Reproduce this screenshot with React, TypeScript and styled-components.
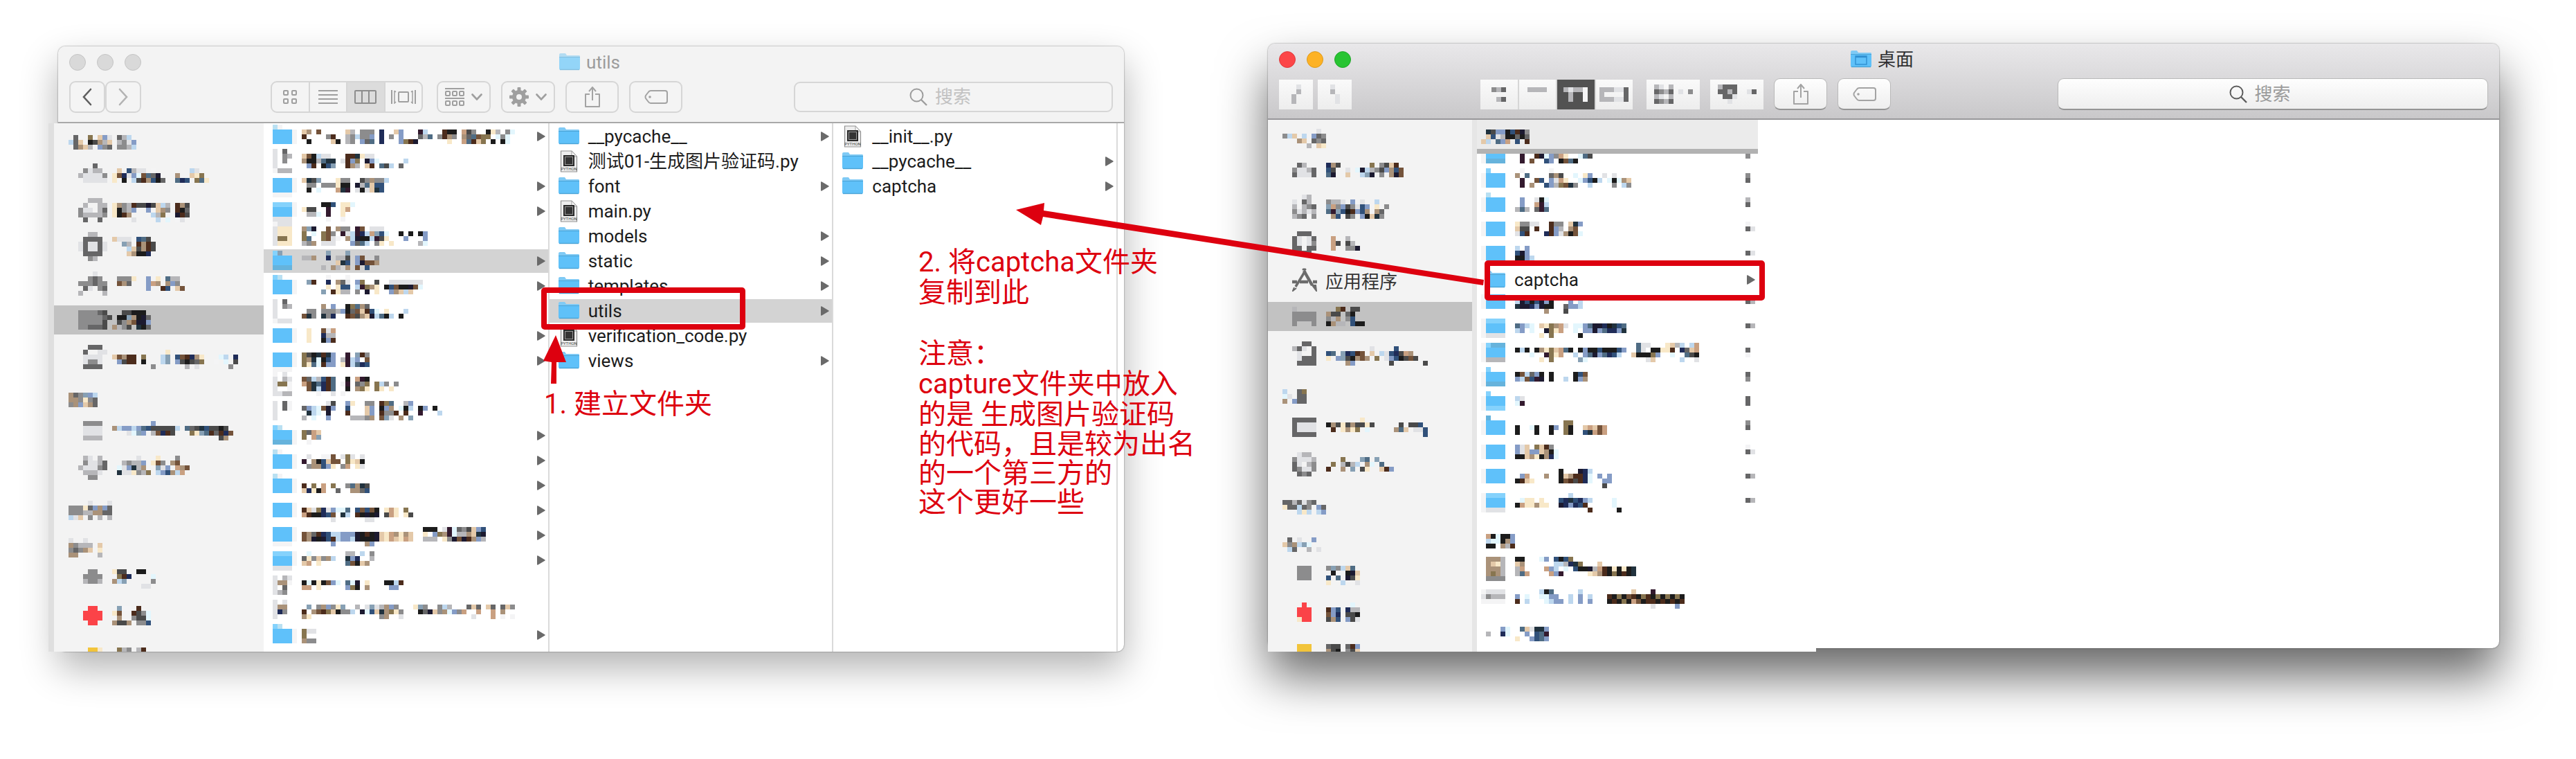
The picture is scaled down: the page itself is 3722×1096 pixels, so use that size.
import React from "react";
import styled, { createGlobalStyle, css } from "styled-components";

const GlobalStyle = createGlobalStyle`
  * { box-sizing: border-box; }
  body {
    margin: 0;
    background: #fff;
    font-family: Roboto, "Noto Sans CJK SC", sans-serif;
    font-size: 26px;
    color: #1c1c1c;
  }
  button, input { font: inherit; color: inherit; }
`;

/* ---------- pixelated content ---------- */

const CELL = 7;
const LATTICE_TOP = 187;

const palette: Record<string, string> = {
  K: "#1c1c1c", d: "#4a4a4a", e: "#666667", g: "#8c8c8d", l: "#b6b6b9", w: "#e1e2e5", v: "#f4f4f5",
  B: "#1c1a30", N: "#1f2c58", n: "#31517a", t: "#4f6c84", b: "#859cc6", x: "#87a0b4", c: "#bdd7ee", i: "#e3f6fd",
  R: "#4c2c1c", r: "#74533a", o: "#877550", T: "#aa9279", s: "#c9a081", p: "#e4c9a9", y: "#f8e8c8",
  P: "#331a2e", m: "#21323e",
  F: "#5fc1fa", f: "#85d2fc", h: "#b9e0f2", q: "#66b3dc",
  E: "#fb4348", Y: "#f2c43a",
};

const MosaicSvg = styled.svg`
  display: block;
  flex: none;
  overflow: visible;
  shape-rendering: crispEdges;
`;

function Mosaic({ lines, shift = 0, rows }: { lines: string[]; shift?: number; rows?: number }) {
  const cols = Math.max(...lines.map((l) => l.length), 1);
  const cells: React.ReactNode[] = [];
  lines.forEach((line, j) => {
    let c = 0;
    while (c < line.length) {
      const ch = line[c];
      let end = c + 1;
      while (end < line.length && line[end] === ch) end++;
      if (palette[ch]) {
        cells.push(
          <rect key={j + "-" + c} x={c * CELL} y={shift + j * CELL} width={(end - c) * CELL} height={CELL} fill={palette[ch]} />
        );
      }
      c = end;
    }
  });
  return (
    <MosaicSvg width={cols * CELL} height={rows ?? lines.length * CELL} aria-hidden="true">
      {cells}
    </MosaicSvg>
  );
}

/* All file rows share one vertical lattice, so each row starts at its own phase. */
function latticeShift(rowTop: number) {
  const dy = (((LATTICE_TOP - rowTop) % CELL) + CELL) % CELL || CELL;
  return dy - CELL;
}

/* ---------- icons ---------- */

const FolderIcon = ({ pale = false, desktop = false }: { pale?: boolean; desktop?: boolean }) => {
  const back = pale ? "#b3dcf2" : "#7fcaf5";
  const front = pale ? "#93d5f8" : "#5fc1f9";
  const edge = pale ? "#83bfdf" : "#4aa3d6";
  return (
    <svg width="30" height="26" viewBox="0 0 30 26" aria-hidden="true">
      <path d="M0 2 Q0 0 2 0 H9 L11 3 H29 Q30 3 30 5 V8 H0 Z" fill={back} />
      <path d="M0 5 H30 V22 Q30 24 28 24 H2 Q0 24 0 22 Z" fill={front} />
      <path d="M0 5.5 H30" stroke={edge} strokeWidth="1" />
      <path d="M1 23.5 H29" stroke={edge} strokeWidth="1.4" />
      {desktop && (
        <>
          <rect x="7" y="8" width="16" height="12" fill="none" stroke="#2f8fd0" strokeWidth="1.4" />
          <path d="M7 9 H23" stroke="#2f8fd0" strokeWidth="2.4" />
        </>
      )}
    </svg>
  );
};

const PythonIcon = () => (
  <svg width="30" height="32" viewBox="0 0 30 32" aria-hidden="true">
    <path d="M3.5 1 H19 L26.500 9 V31 H3.500 Z" fill="#eeeeee" stroke="#8f8f8f" strokeWidth="1.200" />
    <path d="M19 1 V9 H26.500 Z" fill="#fafafa" stroke="#a0a0a0" />
    <rect x="7" y="7" width="16" height="16" fill="#2a2a2a" />
    <rect x="9.500" y="9.500" width="11" height="11" fill="#333" stroke="#999" />
    <text x="15" y="29" textAnchor="middle" fontSize="6" fill="#444" fontFamily="Roboto, sans-serif">PYTHON</text>
  </svg>
);

const Triangle = () => (
  <svg width="12" height="14" viewBox="0 0 12 14" aria-hidden="true">
    <path d="M0 1 Q0 0 1.500 0.500 L11.500 6.500 Q12 7 11.500 7.500 L1.500 13.500 Q0 14 0 13 Z" fill="#6a6a6a" />
  </svg>
);

const AppsIcon = () => (
  <svg width="36" height="34" viewBox="0 0 36 34" fill="none" stroke="#6b6b6b" aria-hidden="true">
    <path d="M16 2 L19 2" strokeWidth="3" strokeLinecap="round" />
    <path d="M17 4 L29 25" strokeWidth="4.500" />
    <path d="M29 25 L35 33 L34 25 Z" fill="#6b6b6b" strokeWidth="2" />
    <path d="M19 4 L5 27" strokeWidth="3.500" />
    <path d="M3 28 L1 33 L6 29" strokeWidth="2" />
    <path d="M0 20 H7 M11 20 H23 M30 20 H36" strokeWidth="4.500" />
  </svg>
);

const ChevronIcon = ({ dir, color }: { dir: "left" | "right"; color: string }) => (
  <svg width="14" height="26" viewBox="0 0 14 26" fill="none" stroke={color} strokeWidth="2.600" strokeLinecap="round" aria-hidden="true">
    <path d={dir === "left" ? "M12 2 L2 13 L12 24" : "M2 2 L12 13 L2 24"} />
  </svg>
);

const DownIcon = () => (
  <svg width="16" height="10" viewBox="0 0 16 10" fill="none" stroke="#9f9f9f" strokeWidth="2.600" strokeLinecap="round" aria-hidden="true">
    <path d="M1.500 1.500 L8 8.500 L14.500 1.500" />
  </svg>
);

const GridIcon = () => (
  <svg width="22" height="22" viewBox="0 0 22 22" fill="none" stroke="#9f9f9f" strokeWidth="2" aria-hidden="true">
    <rect x="2" y="2" width="6" height="6" rx="1" /><rect x="14" y="2" width="6" height="6" rx="1" />
    <rect x="2" y="14" width="6" height="6" rx="1" /><rect x="14" y="14" width="6" height="6" rx="1" />
  </svg>
);

const LinesIcon = () => (
  <svg width="28" height="20" viewBox="0 0 28 20" stroke="#9f9f9f" strokeWidth="2" aria-hidden="true">
    <path d="M0 1 H28 M0 7 H28 M0 13 H28 M0 19 H28" />
  </svg>
);

const ColumnsIcon = () => (
  <svg width="32" height="20" viewBox="0 0 32 20" fill="none" stroke="#8d8d8d" strokeWidth="2" aria-hidden="true">
    <rect x="1" y="1" width="30" height="18" rx="1" />
    <path d="M11 1 V19 M21 1 V19" />
  </svg>
);

const FlowIcon = () => (
  <svg width="36" height="20" viewBox="0 0 36 20" fill="none" stroke="#9f9f9f" strokeWidth="2" aria-hidden="true">
    <path d="M1 0 V20 M35 0 V20" />
    <path d="M5 1 V19 L7 17 M5 1 L7 3 M31 1 V19 L29 17 M31 1 L29 3" strokeWidth="1.500" />
    <rect x="11" y="3" width="14" height="14" rx="1" />
  </svg>
);

const ArrangeIcon = () => (
  <svg width="28" height="26" viewBox="0 0 28 26" fill="none" stroke="#9f9f9f" strokeWidth="2" aria-hidden="true">
    <path d="M0 1 H28 M0 15 H28" />
    {[1, 11, 21].map((x) => (
      <g key={x}>
        <rect x={x} y="5" width="6" height="6" rx="1" />
        <rect x={x} y="19" width="6" height="6" rx="1" />
      </g>
    ))}
  </svg>
);

const GearIcon = () => (
  <svg width="28" height="28" viewBox="-14 -14 28 28" aria-hidden="true">
    {[0, 45, 90, 135].map((a) => (
      <rect key={a} x="-2.500" y="-14" width="5" height="28" rx="1" fill="#9f9f9f" transform={"rotate(" + a + ")"} />
    ))}
    <circle r="7" fill="none" stroke="#9f9f9f" strokeWidth="6" />
    <circle r="4" fill="#f3f3f3" />
  </svg>
);

const ShareIcon = () => (
  <svg width="22" height="30" viewBox="0 0 22 30" fill="none" stroke="#a3a3a3" strokeWidth="2" aria-hidden="true">
    <path d="M7 11 H1 V29 H21 V11 H15" strokeLinejoin="round" />
    <path d="M11 20 V2 M6 7 L11 1 L16 7" />
  </svg>
);

const TagIcon = () => (
  <svg width="34" height="20" viewBox="0 0 34 20" fill="none" stroke="#a3a3a3" strokeWidth="2" aria-hidden="true">
    <path d="M9 1 H30 Q33 1 33 4 V16 Q33 19 30 19 H9 Q7 19 5 16 L2 12 Q1 10 2 8 L5 4 Q7 1 9 1 Z" />
    <circle cx="8" cy="10" r="1.800" fill="#a3a3a3" stroke="none" />
  </svg>
);

const SearchIcon = ({ color }: { color: string }) => (
  <svg width="26" height="26" viewBox="0 0 26 26" fill="none" stroke={color} strokeWidth="2" aria-hidden="true">
    <circle cx="10.500" cy="10.500" r="9" />
    <path d="M17 17 L25 25" strokeWidth="2.400" />
  </svg>
);

/* ---------- window chrome ---------- */

const Desktop = styled.main`
  position: relative;
  display: flex;
  align-items: flex-start;
  gap: 208px;
  padding: 63px 111px 155px 84px;
  min-width: 2600px;
  overflow: hidden;
`;

const Window = styled.section<{ $active?: boolean }>`
  flex: ${(p) => (p.$active ? 1779 : 1540)} 1 0;
  min-width: 0;
  margin-top: ${(p) => (p.$active ? 0 : 4)}px;
  border-radius: 10px;
  background: #fff;
  box-shadow: ${(p) =>
    p.$active
      ? "0 0 2px rgba(0,0,0,.55), 0 40px 70px rgba(0,0,0,.6)"
      : "0 0 2px rgba(0,0,0,.55), 0 24px 54px rgba(0,0,0,.3)"};
`;

const Chrome = styled.header<{ $active?: boolean }>`
  height: ${(p) => (p.$active ? 110 : 111)}px;
  padding-top: 6px;
  border-radius: 10px 10px 0 0;
  border-bottom: 2px solid ${(p) => (p.$active ? "#98979a" : "#a9a9a9")};
  background: ${(p) => (p.$active ? "linear-gradient(#e9e8ea, #c9c8ca)" : "#f3f3f3")};
`;

const TitleRow = styled.div`
  display: grid;
  grid-template-columns: 1fr auto 1fr;
  align-items: center;
  height: 34px;
  padding-right: 4px;
`;

const Lights = styled.div`
  display: flex;
  gap: 16px;
  padding-left: 16px;
`;

const Light = styled.button<{ $color: string; $edge: string }>`
  width: 24px;
  height: 24px;
  padding: 0;
  border: 1px solid ${(p) => p.$edge};
  border-radius: 50%;
  background: ${(p) => p.$color};
`;

const Title = styled.h1<{ $active?: boolean }>`
  display: flex;
  align-items: center;
  gap: 9px;
  margin: 0;
  font-size: 26px;
  line-height: 34px;
  font-weight: 400;
  color: ${(p) => (p.$active ? "#2f2f31" : "#9c9c9c")};
`;

const Toolbar = styled.div`
  display: flex;
  align-items: center;
  gap: 15px;
  height: 46px;
  margin-top: 10px;
  padding: 0 16px;
`;

const NavGroup = styled.div<{ $pixel?: boolean }>`
  display: flex;
  gap: ${(p) => (p.$pixel ? 7 : 0)}px;
  width: 276px;
`;

const plain = css`
  border: 2px solid #d6d6d6;
  border-radius: 9px;
  background: #f4f4f4;
`;
const raised = css`
  border: 1px solid #b9b9b9;
  border-bottom: 2px solid #949494;
  border-radius: 9px;
  background: linear-gradient(#fefefe, #eeeeee);
`;
const pixelated = css`
  height: 43px;
  border: 0;
  background: linear-gradient(#fafafa, #ededed);
`;

const ToolButton = styled.button<{ $w: number; $look: "plain" | "raised" | "pixel" }>`
  display: flex;
  flex: none;
  align-items: center;
  justify-content: center;
  gap: 10px;
  width: ${(p) => p.$w}px;
  height: 46px;
  padding: 0;
  ${(p) => (p.$look === "plain" ? plain : p.$look === "raised" ? raised : pixelated)}
`;

const Segments = styled.div<{ $pixel?: boolean }>`
  display: flex;
  flex: none;
  width: 220px;
  height: 46px;
  margin-right: 5px;
  overflow: hidden;
  ${(p) => (p.$pixel ? pixelated : plain)}
  ${(p) => p.$pixel && "overflow: visible;"}
`;

const Segment = styled.button<{ $on?: boolean; $pixel?: boolean }>`
  display: flex;
  flex: 1 1 0;
  align-items: center;
  justify-content: center;
  padding: 0;
  border: 0;
  background: ${(p) => (p.$on ? (p.$pixel ? "#525252" : "#dcdcdc") : "transparent")};
  ${(p) => !p.$pixel && "& + & { border-left: 2px solid #d6d6d6; }"}
`;

const SearchBox = styled.label<{ $active?: boolean }>`
  display: flex;
  flex: 0 1 ${(p) => (p.$active ? 622 : 461)}px;
  align-items: center;
  justify-content: center;
  gap: 11px;
  height: ${(p) => (p.$active ? 46 : 44)}px;
  margin-left: auto;
  padding-right: 34px;
  ${(p) => (p.$active ? raised : plain)}
`;

const SearchInput = styled.input<{ $active?: boolean }>`
  width: 56px;
  height: 36px;
  padding: 0;
  border: 0;
  outline: 0;
  background: transparent;
  font-size: 26px;
  &::placeholder { color: ${(p) => (p.$active ? "#9b9b9b" : "#c2c2c2")}; opacity: 1; }
`;

/* ---------- window body ---------- */

const Browser = styled.div`
  display: grid;
  grid-template-columns: 297px repeat(3, 1fr) 11px;
  height: 763px;
`;

const Sidebar = styled.nav<{ $bleed?: boolean }>`
  display: flex;
  flex-direction: column;
  gap: 12px;
  flex: none;
  padding-top: 9px;
  overflow: hidden;
  background: #f3f3f3;
  ${(p) =>
    p.$bleed
      ? "margin-left: -6px; box-shadow: -8px 0 0 #dfdfdf;"
      : "width: 302px; border-right: 7px solid #e6e6e6;"}
`;

const SideSection = styled.div`
  flex: none;
  min-height: 42px;
`;

const SideHeading = styled.div`
  display: flex;
  align-items: center;
  height: 36px;
  padding-left: 21px;
`;

const SideItem = styled.div<{ $on?: boolean }>`
  display: flex;
  align-items: center;
  height: 42px;
  margin: 6px 0 11px;
  padding-left: 21px;
  background: ${(p) => (p.$on ? "#c2c2c2" : "transparent")};
  & + & { margin-top: 11px; }
`;

const SideButton = styled.button`
  display: flex;
  align-items: center;
  gap: 12px;
  height: 42px;
  padding: 0 0 0 14px;
  border: 0;
  background: none;
  color: #333;
`;

const Column = styled.div<{ $first?: boolean }>`
  display: flex;
  flex-direction: column;
  gap: 2px;
  padding-top: 2px;
  min-width: 0;
  border-left: ${(p) => (p.$first ? 0 : 2)}px solid #dadada;
`;

const Row = styled.button<{ $on?: boolean; $pad?: number }>`
  display: flex;
  flex: none;
  align-items: center;
  gap: 13px;
  width: 100%;
  height: 34px;
  padding: 0 4px 0 ${(p) => p.$pad ?? 13}px;
  border: 0;
  background: ${(p) => (p.$on ? "#d3d3d3" : "transparent")};
  line-height: 34px;
  text-align: left;
  white-space: nowrap;
  & > :last-child:not(:first-child) { margin-left: auto; }
`;

const HiddenRow = styled.div<{ $on?: boolean; $pad?: number }>`
  display: flex;
  flex: none;
  align-items: flex-start;
  justify-content: space-between;
  height: 34px;
  padding: 0 4px 0 ${(p) => p.$pad ?? 13}px;
  background: ${(p) => (p.$on ? "#d3d3d3" : "transparent")};
`;

const ArrowSlot = styled.span`
  display: flex;
  align-items: center;
  height: 34px;
`;

const Name = styled.span`
  display: block;
`;

/* ---------- second window's body ---------- */

const DesktopBody = styled.div`
  height: 763px;
`;

const Pane = styled.div`
  display: flex;
  width: 792px;
  height: 768px;
  background: #fff;
`;

const PixelColumn = styled.div`
  width: 406px;
  overflow: hidden;
`;

const ColumnHeading = styled.div`
  height: 49px;
  padding: 14px 0 0 6px;
  border-bottom: 7px solid #b2b2b2;
  background: #ebebeb;
`;

const Scrolled = styled.div`
  display: flex;
  flex-direction: column;
  gap: 2px;
  overflow: hidden;
  & > :first-child { margin-top: -15px; }
`;

const Group = styled.div`
  padding: 26px 0 0 13px;
`;

const GroupRow = styled.div`
  padding: 12px 0 0 6px;
`;

/* ---------- annotations ---------- */

const Frame = styled.div<{ $x: number; $y: number; $w: number; $h: number }>`
  position: absolute;
  left: ${(p) => p.$x}px;
  top: ${(p) => p.$y}px;
  width: ${(p) => p.$w}px;
  height: ${(p) => p.$h}px;
  border: 8px solid #dd000f;
  border-radius: 5px;
`;

const Arrows = styled.svg`
  position: absolute;
  left: 0;
  top: 0;
  pointer-events: none;
`;

const Note = styled.div<{ $x: number; $y: number }>`
  position: absolute;
  left: ${(p) => p.$x}px;
  top: ${(p) => p.$y}px;
  color: #dd000f;
  font-size: 40px;
  white-space: nowrap;
`;

const Lines = styled.p<{ $lh: number }>`
  margin: 0;
  line-height: ${(p) => p.$lh}px;
  white-space: pre;
`;

/* ---------- data ---------- */

type Side = { heading: string[]; items: (string[] | "apps")[]; on?: number };

const leftSide: Side[] = [
  {
    heading: [".e..o.pbw.elc", "cep.KdTlp.lgwb", ".eTpl.bge.gglc"],
    on: 4,
    items: [
      [".....e", "...gwll...p.nlww.v.......cw", "..lwwwwg.yrNwbirteB...T..pyo", "...wwwww.y.K.cdRTnKe..tNn.oty"],
      ["....lll", "...l..ll.yTglRddBdpcl.RTd", "..gww.le.yKglb..b.pTg.RKe", "..gllllg.yKRT....clo..BRd", "...e..e......w....c.i.vw"],
      ["....ll", "...eeee..pwww.ntd", "..wewwew...xl.RTRd", "..wewwew....cpdTRd", "...eeee.....pTKKN", "....gl"],
      [".....w", "....geg...gggy..b.y.tll", "..gggegg..rTe...bsT.Tbg", "...ew.ge........b..Rn.pr", "..l....l"],
      ["..gggged...ddKKK", "..ggggged.KKxTKBe", "..gggggd..dgTrBBb", "..ggeeed.Tlgd.mKe"],
      ["....eee", "...e..ww............y", "...wwww..prTRR.o...cx.nrRNTy...ic.N", "...wggw...bdRR.K...cx.bdKdeo..v.i.d", "...eeee..........g......l.w......g"],
    ],
  },
  {
    heading: ["Tegxbc", "TTgyge", "gTbpTe"],
    items: [
      ["...gggg..........b", "...wwww..Tcbbcbtndddddc.tedmnddKd", "...wwww.....wixb.lrNRd...oyxtReRNr", "...llll........................dT"],
      ["...lw.l.......w...y...g", "...gwwle...lgllb.yrg.Tr", "..lwwwge..iwbmlT..xwb.sTr", "...lllw...mwwyglo.cbnTcs", "....gg"],
    ],
  },
  { heading: ["....w...w", "gggyebTbe", "gggllTTee", "cwp.g.l.l"], items: [] },
  {
    heading: ["w..w", "Tglll.p", "gegTp.y", "TT..v.l"],
    items: [
      ["....gg...ydd..KK", "...gggg...oRN....i", "...lggl..Tcx.....g", "...............ww"],
      ["....EE....xvv.R", "...EEEE..yr..Rdgi", "...EEEE...T..gddi", "....EE...TddT.ggn"],
      ["....YYy...olg.lR", "....YYY...dd..ddd"],
    ],
  },
];

const rightSide: Side[] = [
  {
    heading: [".......w", "gcp.c.beg", "...Tp.ege", ".....l.py"],
    on: 4,
    items: [
      ["...el....NTd......o.gdpR", "..gwwle..nd..w.iBclgdbTnr", "..ewwwe..tB..p..cxB.g.TBr"],
      ["....wl", "..w.el...gllw.b.w..c", "..l.lge..xsgbdgwnb.y.g", "..gwlwl..tPxnKRbnT.Te", "..lge.g...Tn.dg.bKpmg"],
      ["...eee", "..ew.we...s..l", "..ew.wg...sd.dl", "..ee.ee...s..ggB", "...eee"],
      "apps",
      ["..l........oR.dd", "..ggggg..Tdd.eK", "..ggggg..glT.gn", "..g...g..KTll.nKK"],
      ["....ee", "..lew.e...........w....n", "...w..e..nt.xNnRr.p.cwnNdsT", "...weee..y.bxdKTrT.o.wbnKdrd", "...eeee......Tb.......d......d"],
    ],
  },
  {
    heading: ["c..eo", "iw.ee", "T.bee"],
    items: [
      ["..eeeee.........y", "..ewwww..KTdydTddyd.....d.ddn", "..ewwww...R.yTyo.i.....Ttp.wwn", "..eeeee......................n"],
      ["...wll...............", "..gwwwl.....o...xt.x", "..ew.lg...o.ldlc.Ti.t", "..egwwg..R..T.x.dy..pRb", "...ege"],
    ],
  },
  { heading: ["eelewge", "yeeceg.be", "...cyc.cb"], items: [] },
  {
    heading: [".e.w..b", "pgTcxi", ".ce..l.w"],
    items: [
      ["...ggg...gxgcpt", "...ggg....K..KBp", "...ggg...n.t.Bdy", ".........y..c..w"],
      ["....E.........i", "...EEE...Rbn.Nll", "...EEE...rbN.ddK", "...yEE...dTn.bdw"],
      ["...YYY...edd.eRb", "...YYY...TdK.gdp"],
    ],
  },
];

type Hidden = { lines: string[]; open?: boolean; on?: boolean };

const dots = (n: number) => ".".repeat(n);

const projectRows: Hidden[] = [
  { open: true, lines: ["hv", "FFFFv.pT.r.....pl.ggg.N..pb...Pc...RKK.sdg..Kyl.gi", "FFFFv.R....gR..lgcggb.N.g.b...elt.gRTg.Tetroo.igi", "FFFFv..K....pK.lg.bet.N...boRB......y..stRpo.K.Ki"] },
  { lines: ["w.e", "w.gl..prKcww...RRmyww", "w.g...TKKltmm.wRbo.Bbi.....c", "w......bR.Knx..RTl.pR.tdc.e", "vlll"] },
  { open: true, lines: ["", "FFFFv.pmdx...ygg..dgTggc", "FFFFv..gg.gggyKK.Bltpnn", "FFFFv..K.i...smP.wKwpmn", "vvvv"] },
  { open: true, lines: ["", "ffffv.....KKn.yyi", "FFFFv.ydd..P..ys", "FFFFv..lli.P..y", "wwww.......v..v"] },
  { lines: ["vwww", "wyyy..TxB..r.Tgg.Pr.www", "wyyy..o.i.org.PwcPNcsxni..K.K.Kb", "wooy..ot..orwv.TcBKKcPdy...b...b", "wyyy..lgT.www...betc.gy.y.....li"] },
  { open: true, on: true, lines: ["", "fx.........x...x", "FFFF..llT..N.lld.br..g", "FFFF.........pmn.bBrrT", "qqqq......l.Tl.T.r.n"] },
  { open: true, lines: ["", "fh.........v...v", "FFFFv..xR..N.Tew.bo..d..wwwwwww", "FFFFv......y.ynn.cPoTy.KnrKKBri", "FFFFv.....x.Ryll.g.B.y..bTpcp"] },
  { lines: ["w.e", "w.gl......T.b..KotTe", "w......gg.ggglbKerpRni.y...c", "w.....rmg.mgN..RrdTpBctKc.K", "vwww"] },
  { open: true, lines: ["", "FFFFv..y..rws", "FFFFv..y..Nll", "FFFFv..y..KbR"] },
  { open: true, lines: ["", "FFFFv.odKmRmb..P.xRg", "FFFFv.oTmiKnb.lPcb.r", "FFFFv.oytiRbb.yPctNn", "vvvv"] },
  { lines: ["v.w", "w.lw..reclnRt..K.sPK", "woov..srmtNRt.vP.ego.ocg.g", "w..v...rmcNRt..K.Toy.oy.y", "wwll.....v..w.v"] },
  { lines: ["", "w.ev.......wd..by..gg.Rot..lb", "w.ev..ebcirBb..n...pb.KbT.iKc.Kb.K", "w......mci.B...R...pb.RggR.R..P...c", "w.....l.i..b....lllgT.rxw.T.x"] },
  { open: true, lines: ["", "fh", "FFFFv.oesp", "FFFFv.o.sx", "qqqqv..v"] },
  { open: true, lines: ["", "hv", "FFFFv..w..vvr.wow.w", "FFFFv.P.TKnprr.oypK", "FFFFv..gTTnby.gs.yw"] },
  { open: true, lines: ["hv", "FFFFv.", "FFFFv.R.o.s.o..gtTmd", "FFFFv.pNyKs..e..TTen"] },
  { open: true, lines: ["", "FFFFv.", "FFFFv.RpwoNwbiit.nrnrK.ysy.o", "FFFFv.sRKKNnr.mc.RKBKB.dsy.yd", "............w......ww"] },
  { open: true, lines: ["", "FFFFv." + dots(25) + "KKK.wPiegdpbn", "FFFFv.rTeRNnccbbbBKRKBpysTyTp..y.boTPillTpmB", "FFFFv.rTBKBnRcbbcBKKKBpyspysp..lll.ygBrBRTbl", "vvvv........b......Tb"] },
  { open: true, lines: ["", "ffffv..i.......ll.c.g", "FFFFv.eygpgTc..mbN..l", "FFFFv.ps.y.....trKpT", "wwww"] },
  { lines: ["", "w.lw", "wTTv..KiKyKrbi.tiB.y...KKcR", "w.e...ss.y.....boK.T....bb", "wlg"] },
  { lines: ["", "w.w", "wTT....x.gTbgyx..l.wxwlTbg...yxg..gcl...epe.pe.epg", "wNg...R.TrRopKggc.BinpmToyg...KeBpgTibgs..s..s.T", "w.....Ty..............gT..w..............w...s.v.v"] },
  { open: true, lines: ["", "fh", "FFFFv.oww", "FFFFv.o", "FFFFv.Tgg"] },
];

const projectFiles = [
  { name: "__pycache__", folder: true },
  { name: "测试01-生成图片验证码.py" },
  { name: "font", folder: true },
  { name: "main.py" },
  { name: "models", folder: true },
  { name: "static", folder: true },
  { name: "templates", folder: true },
  { name: "utils", folder: true, on: true },
  { name: "verification_code.py" },
  { name: "views", folder: true },
];

const utilsFiles = [
  { name: "__init__.py" },
  { name: "__pycache__", folder: true },
  { name: "captcha", folder: true },
];

const desktopRows: ({ lines: string[]; arrow: string[] } | null)[] = [
  { lines: ["", "", "", "vFFFF...P..RBibgsy..itd", "vqqqq...P.r..nb.KrtK"], arrow: ["", "", "", "g"] },
  { lines: [".f......v.....v", "vFFFF..T.t....eTd..i.yb..w.w", "vFFFF...P..rn.bwsy..ibnKc.iKiTp", "vFFFF...P.T..nblormg..c....g.cg"], arrow: ["", "g", "e"] },
  { lines: [".h", "vFFFF...b..wKi", "vFFFF...b..sPc", "vFFFF..ltl.ePt"], arrow: ["", "l", "e"] },
  { lines: ["", "vFFFF..yggww..Rgg.pmb", "vFFFF..pdd.R..Rbl.Tr", "vFFFF..wnR...NRbwTKri"], arrow: ["", "v", "ew"] },
  { lines: ["", "vFFFF..c.b", "vFFFF..nBb", "vFFFF..KKbc"], arrow: ["", "", "ew"] },
  null,
  { lines: ["", "vFFFF", "vFFFF..cBnKnBbK...b.c", "vFFFF..mBBNbBKK..ebbc", ".............T...d"], arrow: ["", "", "el"] },
  { lines: ["", "vffff", "vFFFF..tbci.pyoTsw.iibtBBNKmnt", "vFFFF..cb.i..Boys..i.bbBbtNNbm", "vwwww.......y.o.....K"], arrow: ["", "", "el"] },
  { lines: ["vfqqq.." + dots(25) + "tww...yplc.cs", "vFFFF..KcK.KTyopstK.KbKKnKKKnb..tw.KKyyR.Neps", "vFFFF.....i..Poys..c.btBbtNnc..pKKKob..i..tdK", "vllll.......y.o.....xi............wp.....c..w"], arrow: ["", "e", "v"] },
  { lines: [".f", "vFFFF..KrcebK.K....Knr", "vFFFF..bcrnPB.K..c.KbT", "vqqqq"], arrow: ["", "e", "g"] },
  { lines: [".f", "vFFFF..cw", "vFFFF..iP", "vffff"], arrow: ["", "e", "e"] },
  { lines: [".q", "vFFFF............oo", "vFFFF..K..iK..Kb.oK..psprs", "vFFFF..K...K..K..oK..nmsrs"], arrow: ["", "g", "e"] },
  { lines: ["", "vFFFF..bwp.opRg", "vFFFF..bwpbbpTKi", "vFFFF..KKpTyKTNi"], arrow: ["", "v", "ew"] },
  { lines: ["", "vFFFF...........K...BNc", "vFFFF...bs...T..KpTRRNi.b.b", "vFFFF..KRpy.....KrRdRNi..bb", dots(25) + "d"], arrow: ["", "", "el"] },
  { lines: ["", "vffff.............c", "vFFFF...iyy.y...nNmnNbc....i", "vFFFF..KsyyTyy..BNbNnR.....i", "vwwww.................R.....K"], arrow: ["", "", "el"] },
];

/* ---------- parts ---------- */

function SidebarList({ sections, bleed }: { sections: Side[]; bleed?: boolean }) {
  return (
    <Sidebar $bleed={bleed}>
      {sections.map((s, n) => (
        <SideSection key={n}>
          <SideHeading><Mosaic lines={s.heading} /></SideHeading>
          {s.items.map((it, k) => (
            <SideItem key={k} $on={s.on === k}>
              {it === "apps" ? (
                <SideButton type="button"><AppsIcon /><Name>应用程序</Name></SideButton>
              ) : (
                <Mosaic lines={it} />
              )}
            </SideItem>
          ))}
        </SideSection>
      ))}
    </Sidebar>
  );
}

function FileRow({ name, folder, on, pad }: { name: string; folder?: boolean; on?: boolean; pad?: number }) {
  return (
    <Row type="button" $on={on} $pad={pad}>
      {folder ? <FolderIcon /> : <PythonIcon />}
      <Name>{name}</Name>
      {folder ? <Triangle /> : <span />}
    </Row>
  );
}

function Search({ id, active }: { id: string; active?: boolean }) {
  return (
    <SearchBox htmlFor={id} $active={active}>
      <SearchIcon color={active ? "#5c5c5c" : "#9c9c9c"} />
      <SearchInput id={id} type="text" placeholder="搜索" $active={active} />
    </SearchBox>
  );
}

const idle = { c: "#d9d9d9", e: "#c4c4c4" };

function UtilsWindow() {
  return (
    <Window>
      <Chrome>
        <TitleRow>
          <Lights>
            {["关闭", "最小化", "缩放"].map((l) => (
              <Light key={l} type="button" aria-label={l} $color={idle.c} $edge={idle.e} />
            ))}
          </Lights>
          <Title><FolderIcon pale />utils</Title>
          <span />
        </TitleRow>
        <Toolbar>
          <NavGroup>
            <ToolButton type="button" aria-label="后退" $w={52} $look="plain"><ChevronIcon dir="left" color="#5e5e5e" /></ToolButton>
            <ToolButton type="button" aria-label="前进" $w={52} $look="plain"><ChevronIcon dir="right" color="#b3b3b3" /></ToolButton>
          </NavGroup>
          <Segments>
            <Segment type="button" aria-label="图标"><GridIcon /></Segment>
            <Segment type="button" aria-label="列表"><LinesIcon /></Segment>
            <Segment type="button" aria-label="分栏" $on><ColumnsIcon /></Segment>
            <Segment type="button" aria-label="画廊"><FlowIcon /></Segment>
          </Segments>
          <ToolButton type="button" aria-label="排列" $w={78} $look="plain"><ArrangeIcon /><DownIcon /></ToolButton>
          <ToolButton type="button" aria-label="操作" $w={78} $look="plain"><GearIcon /><DownIcon /></ToolButton>
          <ToolButton type="button" aria-label="共享" $w={77} $look="plain"><ShareIcon /></ToolButton>
          <ToolButton type="button" aria-label="标签" $w={77} $look="plain"><TagIcon /></ToolButton>
          <Search id="search-utils" />
        </Toolbar>
      </Chrome>
      <Browser>
        <SidebarList sections={leftSide} bleed />
        <Column $first>
          {projectRows.map((r, k) => (
            <HiddenRow key={k} $on={r.on}>
              <Mosaic lines={r.lines} shift={latticeShift(180 + 36 * k)} rows={34} />
              <ArrowSlot>{r.open && <Triangle />}</ArrowSlot>
            </HiddenRow>
          ))}
        </Column>
        <Column>{projectFiles.map((f) => <FileRow key={f.name} {...f} />)}</Column>
        <Column>{utilsFiles.map((f) => <FileRow key={f.name} {...f} />)}</Column>
        <Column />
      </Browser>
    </Window>
  );
}

function DesktopWindow() {
  return (
    <Window $active>
      <Chrome $active>
        <TitleRow>
          <Lights>
            <Light type="button" aria-label="关闭" $color="#fc4648" $edge="#de3a3c" />
            <Light type="button" aria-label="最小化" $color="#fdb225" $edge="#dd9a1d" />
            <Light type="button" aria-label="缩放" $color="#28c432" $edge="#1fa628" />
          </Lights>
          <Title $active><FolderIcon desktop />桌面</Title>
          <span />
        </TitleRow>
        <Toolbar>
          <NavGroup $pixel>
            <ToolButton type="button" aria-label="后退" $w={49} $look="pixel"><Mosaic lines={[".w", ".l", "l", "l"]} /></ToolButton>
            <ToolButton type="button" aria-label="前进" $w={49} $look="pixel"><Mosaic lines={["w", "l", ".w", ".w"]} /></ToolButton>
          </NavGroup>
          <Segments $pixel>
            <Segment type="button" aria-label="图标" $pixel><Mosaic lines={["gle", "", ".le"]} /></Segment>
            <Segment type="button" aria-label="列表" $pixel><Mosaic lines={["llll", "", ""]} /></Segment>
            <Segment type="button" aria-label="分栏" $on $pixel><Mosaic lines={["lwllv", ".l..v", ".l..v"]} /></Segment>
            <Segment type="button" aria-label="画廊" $pixel><Mosaic lines={["lllwwe", "l....e", "lllwwe"]} /></Segment>
          </Segments>
          <ToolButton type="button" aria-label="排列" $w={77} $look="pixel"><Mosaic lines={["lw.l", "egle.w.g", "lw.l", "egle"]} /></ToolButton>
          <ToolButton type="button" aria-label="操作" $w={77} $look="pixel"><Mosaic lines={["leee", "eele..we", ".eew", "..w"]} /></ToolButton>
          <ToolButton type="button" aria-label="共享" $w={77} $look="raised"><ShareIcon /></ToolButton>
          <ToolButton type="button" aria-label="标签" $w={77} $look="raised"><TagIcon /></ToolButton>
          <Search id="search-desktop" active />
        </Toolbar>
      </Chrome>
      <DesktopBody>
        <Pane>
          <SidebarList sections={rightSide} />
          <PixelColumn>
            <ColumnHeading><Mosaic lines={[".mdbbKnRBg", ".pnwlKKeKe", "pc.tbs.n.R"]} /></ColumnHeading>
            <Scrolled>
              {desktopRows.map((r, k) =>
                r ? (
                  <HiddenRow key={k} $pad={6}>
                    <Mosaic lines={r.lines} shift={latticeShift(207 + 36 * k)} rows={34} />
                    <Mosaic lines={r.arrow.map((a) => a.padEnd(2, "."))} shift={latticeShift(207 + 36 * k)} rows={34} />
                  </HiddenRow>
                ) : (
                  <FileRow key={k} name="captcha" folder pad={11} />
                )
              )}
            </Scrolled>
            <Group><Mosaic lines={["sKiKKb", "ciiKTb", "KK.TlR"]} /></Group>
            <GroupRow>
              <Mosaic lines={[".TTTl..KK...ib.nKno", ".Tpyl..pT......cclNmo...p", ".TTTl..ls....sbc.i.nKKBlsRKyKyKm", ".ToTl..lts....sbP.....ypTRKoKRKm", ".gggg"]} />
            </GroupRow>
            <GroupRow>
              <Mosaic lines={["vwwww.......cKt.....c..........p...P", "wglll..b.i..iibb..c.b.c...RKoKrRKoRKoKoKoK", "vvvvv..R.c...icbb.c.b.b...KRKoKsrKRRKRKRKR", dots(35) + "w....b"]} />
            </GroupRow>
            <Group><Mosaic lines={["...bi..tpwmmb", "l..Ni...b.ntP", "......y..bntb"]} /></Group>
          </PixelColumn>
        </Pane>
      </DesktopBody>
    </Window>
  );
}

export default function App() {
  return (
    <>
      <GlobalStyle />
      <Desktop>
        <UtilsWindow />
        <DesktopWindow />
        <Arrows width="2160" height="600" aria-hidden="true">
          <g fill="#dd000f">
            <path d="M803 484 L818 523 L804 523 L804 554 L796 554 L797 523 L785 521 Z" />
            <path d="M1468 303 L1509 293 L1508 304 L2144 404 L2143 412 L1507 313 L1504 325 Z" />
          </g>
        </Arrows>
        <Frame $x={782} $y={415} $w={295} $h={61} />
        <Frame $x={2145} $y={376} $w={405} $h={58} />
        <Note $x={786} $y={562}><Lines $lh={44}>1. 建立文件夹</Lines></Note>
        <Note $x={1327} $y={357}>
          <Lines $lh={44}>{"2. 将captcha文件夹\n复制到此\n\n注意："}</Lines>
          <Lines $lh={44}>{"capture文件夹中放入\n的是 生成图片验证码"}</Lines>
          <Lines $lh={42}>{"的代码，且是较为出名\n的一个第三方的\n这个更好一些"}</Lines>
        </Note>
      </Desktop>
    </>
  );
}
